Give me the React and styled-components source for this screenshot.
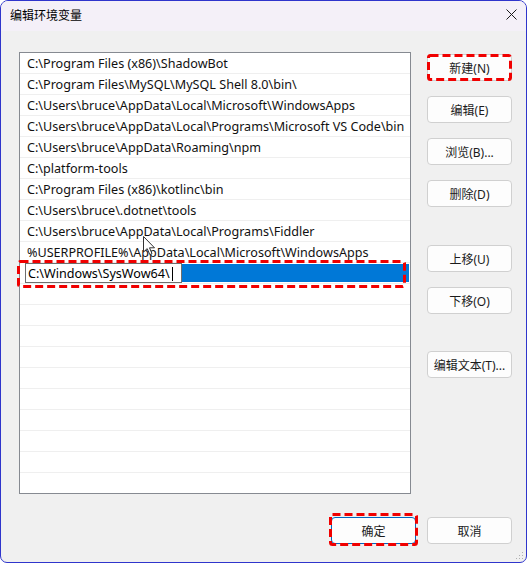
import styled, { createGlobalStyle } from 'styled-components';

const GlobalStyle = createGlobalStyle`
  html, body {
    margin: 0;
    padding: 0;
    background: #ffffff;
  }
  * {
    box-sizing: border-box;
  }
`;

const Window = styled.div`
  position: relative;
  width: 527px;
  height: 563px;
  display: flex;
  flex-direction: column;
  border: 1px solid #2f35cc;
  border-radius: 8px 8px 7px 7px;
  overflow: hidden;
  background: #f0f0f0;
  font-family: "Noto Sans", "Noto Sans CJK SC", sans-serif;
  color: #000;
`;

const TitleBar = styled.div`
  height: 30px;
  flex: none;
  display: flex;
  align-items: center;
  justify-content: space-between;
  padding: 0 9px 3px 9px;
  background: #f4f0f8;
  font-family: "Noto Sans CJK SC", sans-serif;
  font-size: 12px;
`;

const CloseButton = styled.div`
  width: 12px;
  height: 12px;
  display: flex;
  align-items: center;
  justify-content: center;
`;

const Body = styled.div`
  flex: 1;
  display: flex;
  flex-direction: column;
  padding: 21px 14px 0 18px;
`;

const Main = styled.div`
  display: flex;
  gap: 16px;
`;

const ListFrame = styled.div`
  position: relative;
`;

const ListBox = styled.div`
  position: relative;
  width: 392px;
  height: 442px;
  border: 1px solid #868a91;
  background: #ffffff;
  overflow: hidden;
`;

const Row = styled.div`
  height: 21px;
  display: flex;
  align-items: center;
  padding: 1px 0 0 7px;
  border-bottom: 1px solid #efefef;
  font-size: 12.6px;
  color: #111;
  white-space: nowrap;
`;

const EditRow = styled.div`
  height: 21px;
  display: flex;
  align-items: stretch;
  padding-left: 5px;
  border-bottom: 1px solid #efefef;
`;

const EditField = styled.div`
  width: 157px;
  display: flex;
  align-items: center;
  padding: 1px 0 0 2px;
  border: 1px solid #6e6e6e;
  background: #fff;
  font-size: 12.6px;
  white-space: nowrap;
`;

const Caret = styled.span`
  display: inline-block;
  width: 1px;
  height: 14px;
  margin-left: 2px;
  background: #000;
`;

const Selection = styled.div`
  flex: 1;
  margin: 1px 1px 1px 0;
  background: #0078d7;
`;

const SideButtons = styled.div`
  display: flex;
  flex-direction: column;
  gap: 15px;
  padding-top: 2px;
`;

const Button = styled.button`
  position: relative;
  width: 85px;
  height: 27px;
  margin-top: ${p => p.$space || 0}px;
  padding: 0;
  border: 1px solid ${p => (p.$primary ? '#0067c0' : '#d0d0d0')};
  border-radius: 4px;
  background: #fdfdfd;
  font-family: "Noto Sans", "Noto Sans CJK SC", sans-serif;
  font-size: 12px;
  color: #1b1b1b;
`;

const Footer = styled.div`
  display: flex;
  justify-content: flex-end;
  gap: 11px;
  margin-top: 23px;
`;

const Mark = styled.svg`
  position: absolute;
  left: ${p => p.$left}px;
  top: ${p => p.$top}px;
  overflow: visible;
  pointer-events: none;
`;

const Pointer = styled.svg`
  position: absolute;
  left: 123px;
  top: 183px;
`;

const Grip = styled.svg`
  position: absolute;
  right: 2px;
  bottom: 2px;
`;

const paths = [
  'C:\\Program Files (x86)\\ShadowBot',
  'C:\\Program Files\\MySQL\\MySQL Shell 8.0\\bin\\',
  'C:\\Users\\bruce\\AppData\\Local\\Microsoft\\WindowsApps',
  'C:\\Users\\bruce\\AppData\\Local\\Programs\\Microsoft VS Code\\bin',
  'C:\\Users\\bruce\\AppData\\Roaming\\npm',
  'C:\\platform-tools',
  'C:\\Program Files (x86)\\kotlinc\\bin',
  'C:\\Users\\bruce\\.dotnet\\tools',
  'C:\\Users\\bruce\\AppData\\Local\\Programs\\Fiddler',
  '%USERPROFILE%\\AppData\\Local\\Microsoft\\WindowsApps',
];

// 赤い破線の注釈枠
function DashedBox({ left, top, width, height }) {
  return (
    <Mark $left={left} $top={top} width={width} height={height}>
      <rect
        x="1.5"
        y="1.5"
        width={width - 3}
        height={height - 3}
        rx="2"
        fill="none"
        stroke="#f00000"
        strokeWidth="3"
        strokeDasharray="8 4"
      />
    </Mark>
  );
}

export default function App() {
  const empty = Array.from({ length: 10 });

  return (
    <>
      <GlobalStyle />
      <Window>
        <TitleBar>
          <span>编辑环境变量</span>
          <CloseButton>
            <svg width="11" height="11" viewBox="0 0 11 11">
              <path d="M0.5 0.5 L10.5 10.5 M10.5 0.5 L0.5 10.5" stroke="#1a1a1a" strokeWidth="1" />
            </svg>
          </CloseButton>
        </TitleBar>

        <Body>
          <Main>
            <ListFrame>
              <ListBox>
                {paths.map(p => (
                  <Row key={p}>{p}</Row>
                ))}
                <EditRow>
                  <EditField>
                    C:\Windows\SysWow64\
                    <Caret />
                  </EditField>
                  <Selection />
                </EditRow>
                {empty.map((_, i) => (
                  <Row key={i} />
                ))}

                <Pointer width="13" height="20" viewBox="0 0 13 20">
                  <path
                    d="M0.5 0.5 L0.5 16 L4.2 12.6 L6.8 18.6 L9 17.6 L6.5 11.8 L11.5 11.8 Z"
                    fill="#fff"
                    stroke="#333"
                    strokeWidth="1"
                    strokeLinejoin="round"
                  />
                </Pointer>
              </ListBox>
              <DashedBox left={-2} top={208} width={389} height={28} />
            </ListFrame>

            <SideButtons>
              <Button>
                新建(N)
                <DashedBox left={-1} top={-1} width={85} height={27} />
              </Button>
              <Button>编辑(E)</Button>
              <Button>浏览(B)...</Button>
              <Button>删除(D)</Button>
              <Button $space={23}>上移(U)</Button>
              <Button>下移(O)</Button>
              <Button $space={22}>编辑文本(T)...</Button>
            </SideButtons>
          </Main>

          <Footer>
            <Button $primary>
              确定
              <DashedBox left={-3} top={-5} width={89} height={33} />
            </Button>
            <Button>取消</Button>
          </Footer>
        </Body>

        <Grip width="8" height="8" viewBox="0 0 8 8">
          <rect x="6" y="0" width="1" height="1" fill="#b0b0b0" />
          <rect x="3" y="3" width="1" height="1" fill="#b0b0b0" />
          <rect x="6" y="3" width="1" height="1" fill="#b0b0b0" />
          <rect x="0" y="6" width="1" height="1" fill="#b0b0b0" />
          <rect x="3" y="6" width="1" height="1" fill="#b0b0b0" />
          <rect x="6" y="6" width="1" height="1" fill="#b0b0b0" />
        </Grip>
      </Window>
    </>
  );
}
